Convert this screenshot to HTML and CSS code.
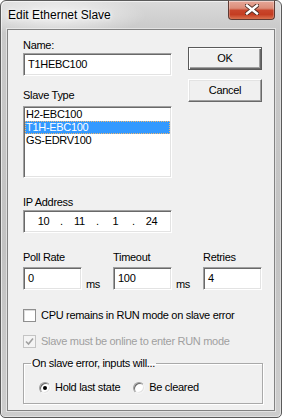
FILE: index.html
```html
<!DOCTYPE html>
<html lang="en">
<head>
  <meta charset="UTF-8">
  <title>Edit Ethernet Slave</title>
  <link rel="stylesheet" href="styles.css">
</head>
<body>
  <div class="window">
    <div class="titlebar">
      <span class="title">Edit Ethernet Slave</span>
      <div class="close">
        <svg width="14" height="11" viewBox="0 0 14 11">
          <path d="M2 1.5 L12 9.5 M12 1.5 L2 9.5" stroke="#4a2a22" stroke-width="4.2" stroke-linecap="square"/>
          <path d="M2 1.5 L12 9.5 M12 1.5 L2 9.5" stroke="#ffffff" stroke-width="2.4" stroke-linecap="square"/>
        </svg>
      </div>
    </div>

    <div class="client">
      <div class="top">
        <div class="left">
          <label class="lbl">Name:</label>
          <div class="field name">T1HEBC100</div>
          <label class="lbl slave-lbl">Slave Type</label>
          <div class="listbox">
            <div class="item">H2-EBC100</div>
            <div class="item sel">T1H-EBC100</div>
            <div class="item">GS-EDRV100</div>
          </div>
        </div>
        <div class="buttons">
          <div class="btn default">OK</div>
          <div class="btn cancel">Cancel</div>
        </div>
      </div>

      <label class="lbl ip-lbl">IP Address</label>
      <div class="field ip">
        <span class="seg">10</span><span class="dot">.</span>
        <span class="seg">11</span><span class="dot">.</span>
        <span class="seg">1</span><span class="dot">.</span>
        <span class="seg">24</span>
      </div>

      <div class="row3">
        <div class="col">
          <label class="lbl">Poll Rate</label>
          <div class="with-unit"><div class="field small">0</div><span class="unit">ms</span></div>
        </div>
        <div class="col">
          <label class="lbl">Timeout</label>
          <div class="with-unit"><div class="field small">100</div><span class="unit">ms</span></div>
        </div>
        <div class="col">
          <label class="lbl">Retries</label>
          <div class="field small">4</div>
        </div>
      </div>

      <div class="check">
        <span class="box"></span>
        <span>CPU remains in RUN mode on slave error</span>
      </div>
      <div class="check disabled">
        <span class="box">
          <svg width="9" height="9" viewBox="0 0 9 9"><path d="M1 4.5 L3.5 7 L8 1.5" fill="none" stroke="#a0a0a0" stroke-width="1.6"/></svg>
        </span>
        <span>Slave must be online to enter RUN mode</span>
      </div>

      <fieldset class="group">
        <legend>On slave error, inputs will...</legend>
        <div class="radios">
          <div class="radio on"><span class="circle"></span>Hold last state</div>
          <div class="radio"><span class="circle"></span>Be cleared</div>
        </div>
      </fieldset>
    </div>
  </div>
</body>
</html>
```

FILE: styles.css
```css
body {
  margin: 0;
  font-family: "Liberation Sans", Arial, sans-serif;
  font-size: 11px;
  color: #000;
}
.window {
  width: 282px;
  height: 418px;
  box-sizing: border-box;
  border: 1px solid #5a5a5a;
  border-radius: 6px 6px 5px 5px;
  background:
    radial-gradient(ellipse 90px 22px at 55px 14px, rgba(255,255,255,0.75), rgba(255,255,255,0) 100%),
    linear-gradient(#dadada, #c9c9c9 30px, #c2c2c2 60%, #cdcdcd);
  box-shadow: inset 1px 1px 0 rgba(255,255,255,0.6), inset -1px -1px 0 rgba(255,255,255,0.4);
  padding: 0 6px 6px;
  display: flex;
  flex-direction: column;
}
.titlebar {
  height: 28px;
  display: flex;
  justify-content: space-between;
  align-items: flex-start;
}
.title {
  font-family: "Liberation Sans", Arial, sans-serif;
  font-size: 12px;
  line-height: 14px;
  margin: 7px 0 0 1px;
  color: #000;
  text-shadow: 0 0 6px #fff, 0 0 3px #fff;
}
.close {
  width: 47px;
  height: 20px;
  margin-top: -1px;
  box-sizing: border-box;
  border: 1px solid #5e3a33;
  border-top-color: #6a6a6a;
  border-radius: 0 0 4px 4px;
  background: linear-gradient(#e6a798 0%, #dc8d79 40%, #c8452b 52%, #c43d22 75%, #d9724f 100%);
  box-shadow: inset 0 1px 0 rgba(255,255,255,0.45), inset 1px 0 0 rgba(255,255,255,0.25), inset -1px 0 0 rgba(255,255,255,0.25);
  display: flex;
  align-items: center;
  justify-content: center;
}
.close svg { display: block; margin-top: -1px; }

.client {
  flex: 1;
  box-sizing: border-box;
  border: 1px solid #828282;
  box-shadow: 0 0 0 1px rgba(255,255,255,0.45);
  background: #f0f0f0;
  padding: 9px 0 0 15px;
  display: flex;
  flex-direction: column;
  align-items: flex-start;
  letter-spacing: -0.3px;
}
.lbl {
  display: block;
  line-height: 13px;
  height: 13px;
}
.field {
  box-sizing: border-box;
  height: 23px;
  background: #fff;
  border: 1px solid;
  border-color: #a0a0a0 #fff #fff #a0a0a0;
  box-shadow: inset 1px 1px 0 #696969, inset -1px -1px 0 #e3e3e3;
  line-height: 21px;
  padding-left: 4px;
  white-space: nowrap;
}

.top {
  display: flex;
  gap: 16px;
}
.left {
  width: 149px;
}
.name {
  margin-top: 1px;
  width: 149px;
}
.slave-lbl {
  margin-top: 13px;
}
.listbox {
  margin-top: 4px;
  box-sizing: border-box;
  width: 149px;
  height: 72px;
  background: #fff;
  border: 1px solid;
  border-color: #a0a0a0 #fff #fff #a0a0a0;
  box-shadow: inset 1px 1px 0 #696969, inset -1px -1px 0 #e3e3e3;
  padding: 1px;
}
.item {
  height: 13px;
  line-height: 13px;
  padding-left: 1px;
  box-sizing: border-box;
}
.item.sel {
  background: #3399ff;
  color: #fff;
  border: 1px dotted #f2b870;
  line-height: 11px;
  padding-left: 0;
}

.buttons {
  margin-top: 8px;
  width: 74px;
  display: flex;
  flex-direction: column;
  gap: 9px;
}
.btn {
  box-sizing: border-box;
  height: 23px;
  line-height: 21px;
  text-align: center;
  background: #f0f0f0;
  border: 1px solid;
  border-color: #fff #696969 #696969 #fff;
  box-shadow: inset -1px -1px 0 #a0a0a0, inset 1px 1px 0 #e3e3e3;
}
.btn.default {
  border-color: #5a5a5a;
  box-shadow: inset 1px 1px 0 #fff, inset -1px -1px 0 #696969, inset -2px -2px 0 #a0a0a0;
}

.ip-lbl {
  margin-top: 18px;
}
.ip {
  margin-top: 1px;
  width: 149px;
  display: flex;
  padding-left: 6px;
}
.seg {
  width: 27px;
  text-align: center;
}
.dot {
  width: 9px;
  text-align: center;
}

.row3 {
  margin-top: 18px;
  display: grid;
  grid-template-columns: 90px 90px 59px;
}
.row3 .field {
  margin-top: 3px;
}
.small {
  width: 59px;
}
.with-unit {
  display: flex;
  align-items: flex-end;
}
.unit {
  margin-left: 4px;
  line-height: 13px;
  margin-bottom: -1px;
}

.check {
  display: flex;
  align-items: center;
  gap: 5px;
  height: 13px;
  line-height: 13px;
  margin-top: 19px;
}
.check + .check {
  margin-top: 13px;
}
.box {
  box-sizing: border-box;
  width: 13px;
  height: 13px;
  background: #fff;
  border: 1px solid #8f8f8f;
  box-shadow: inset 1px 1px 0 #dcdcdc;
  display: flex;
  align-items: center;
  justify-content: center;
}
.check.disabled {
  color: #a0a0a0;
}
.check.disabled .box {
  background: #f4f4f4;
  border-color: #c4c4c4;
  box-shadow: none;
}

.group {
  margin: 9px 0 0 0;
  width: 240px;
  box-sizing: border-box;
  border: 1px solid #a9a9a9;
  box-shadow: 1px 1px 0 #fff, inset 1px 1px 0 #fff;
  padding: 0 0 9px 7px;
}
.group legend {
  padding: 0 1px;
  line-height: 13px;
}
.radios {
  display: flex;
  margin: 11px 0 0 8px;
  gap: 13px;
}
.radio {
  display: flex;
  align-items: center;
  gap: 4px;
  line-height: 13px;
}
.circle {
  box-sizing: border-box;
  width: 12px;
  height: 12px;
  border-radius: 50%;
  background: #fff;
  border: 1px solid;
  border-color: #a0a0a0 #f4f4f4 #f4f4f4 #a0a0a0;
  box-shadow: inset 1px 1px 0 #696969, inset -1px -1px 0 #e3e3e3;
  display: flex;
  align-items: center;
  justify-content: center;
}
.radio.on .circle::after {
  content: "";
  width: 4px;
  height: 4px;
  border-radius: 50%;
  background: #000;
}
```
